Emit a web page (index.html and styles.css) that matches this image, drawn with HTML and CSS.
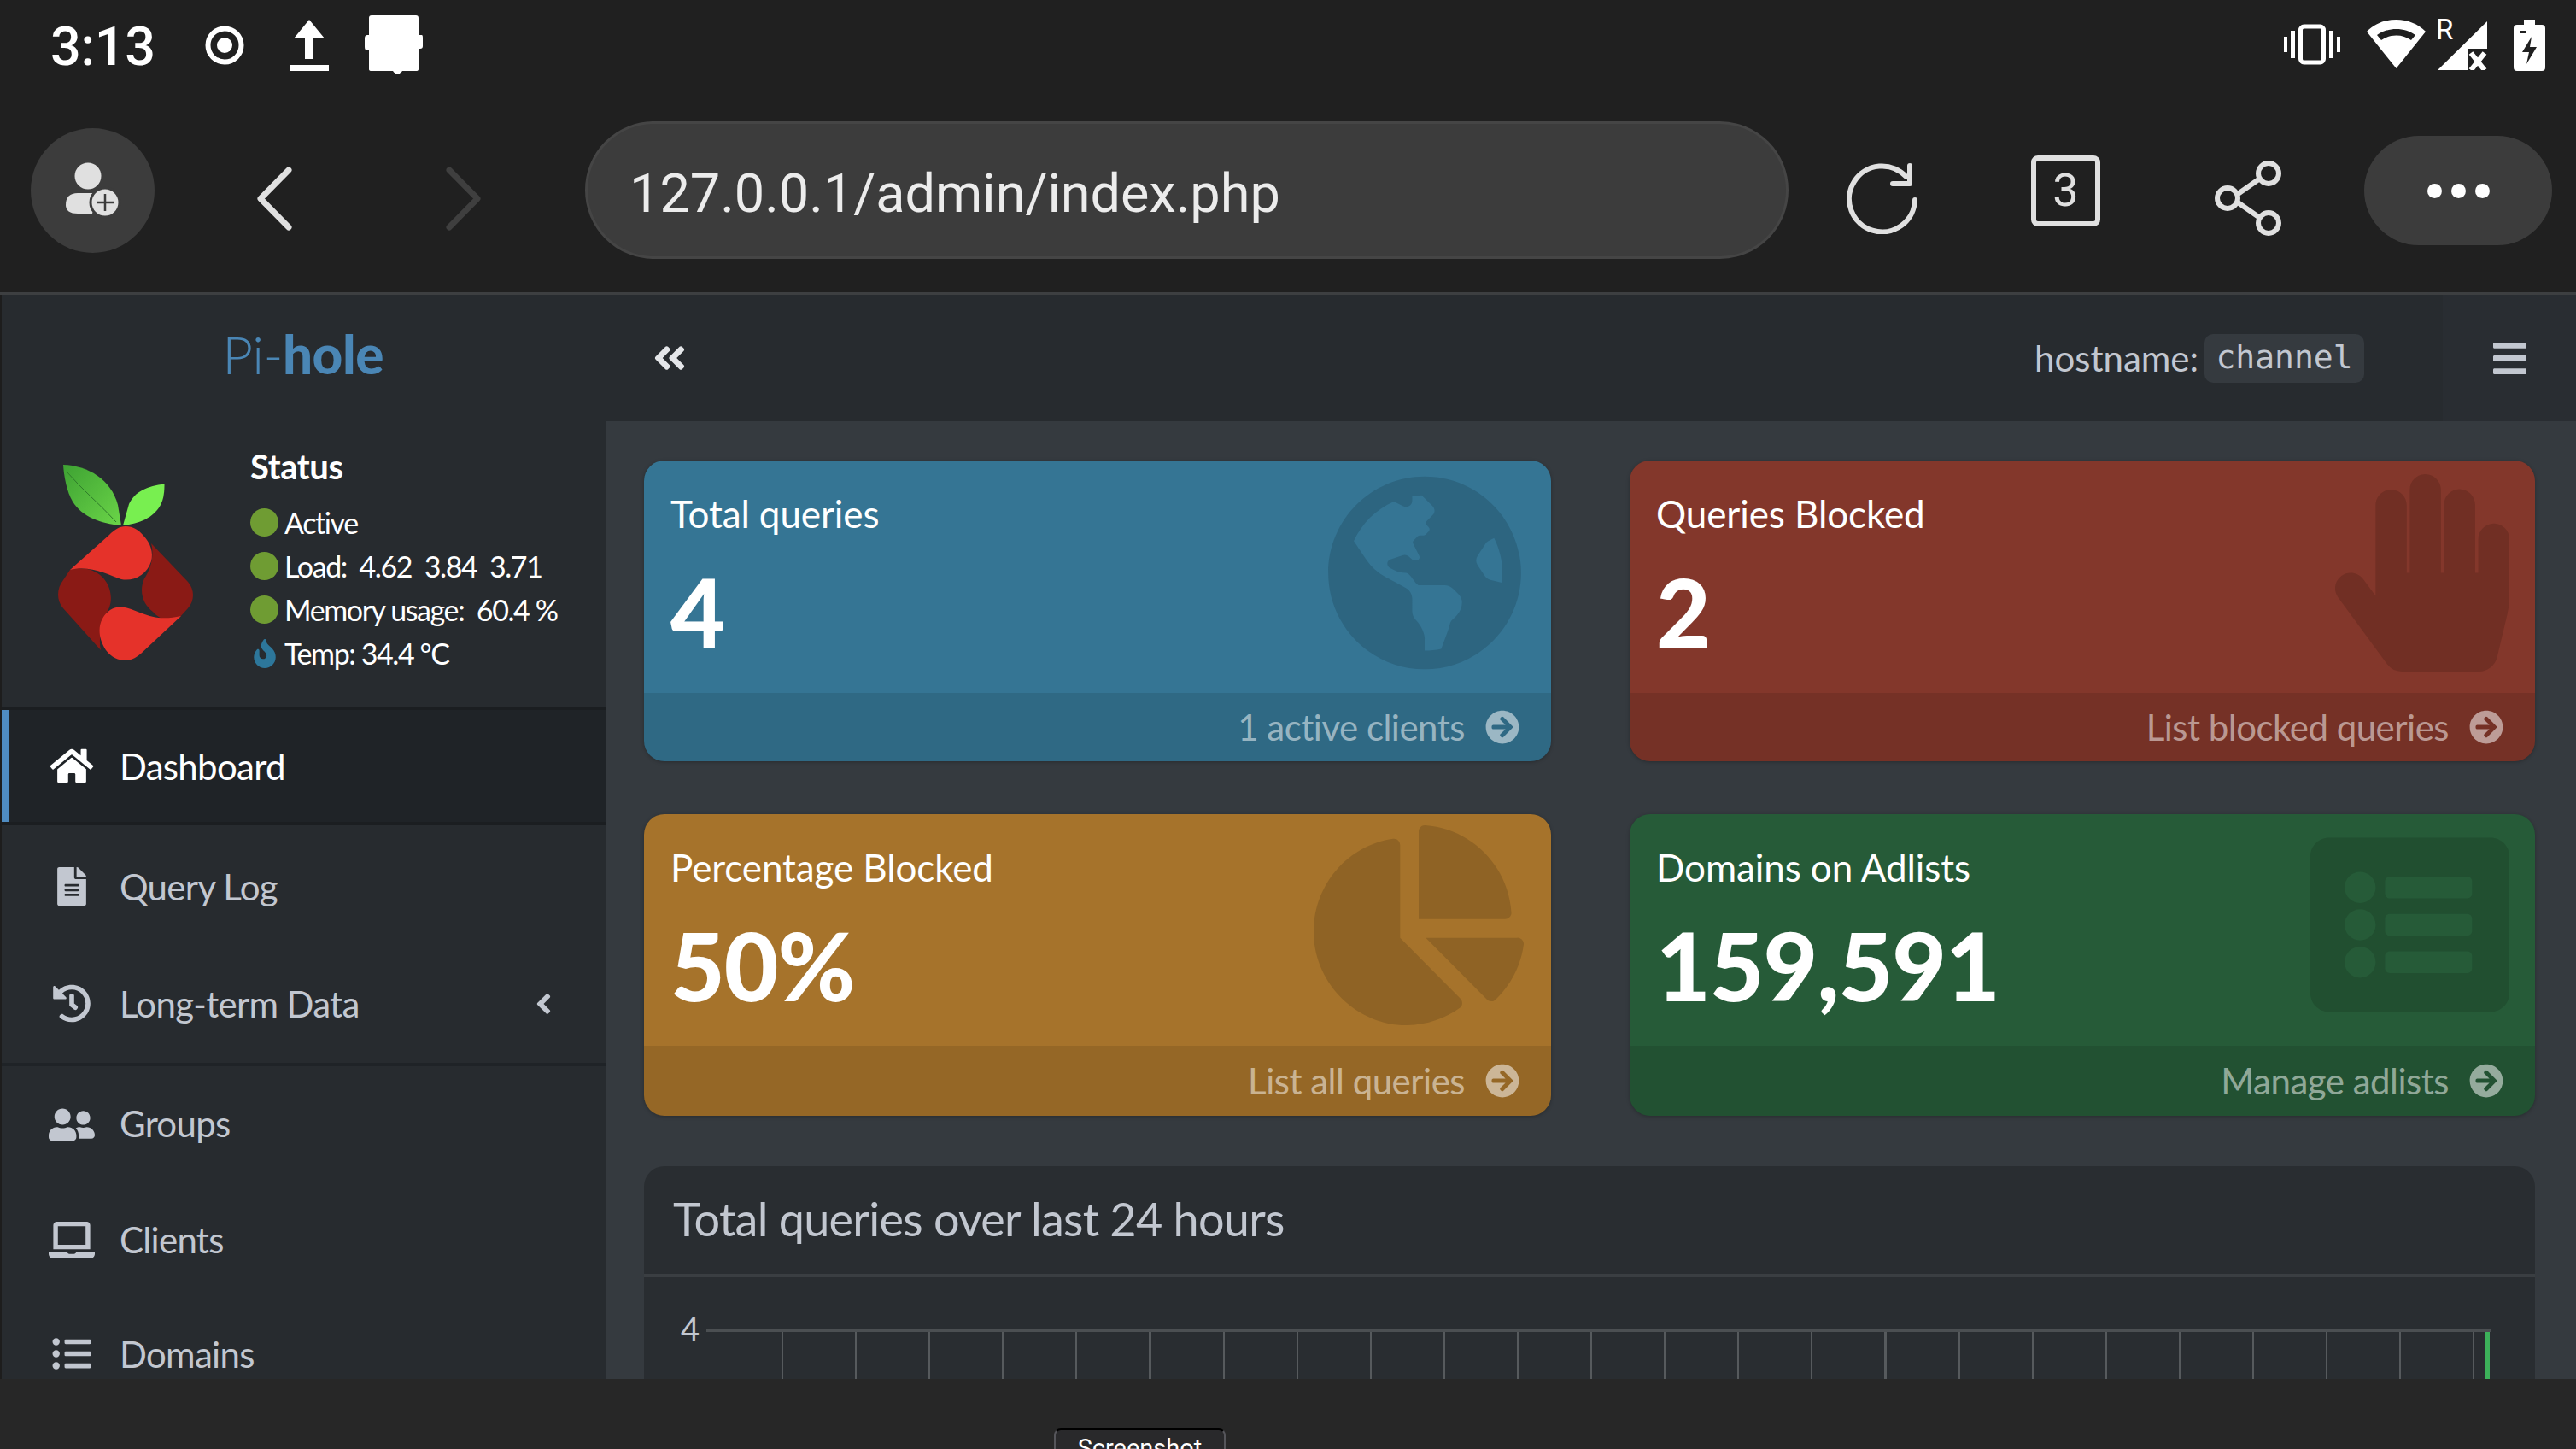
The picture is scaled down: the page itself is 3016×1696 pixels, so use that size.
FILE: index.html
```html
<!DOCTYPE html>
<html lang="en">
<head>
<meta charset="utf-8">
<title>Pi-hole</title>
<link rel="stylesheet" href="styles.css">
</head>
<body>
<div class="screen">
  <div class="chrome">
    <div class="statusbar">
      <span class="clock">3:13</span>
      <svg class="st st-rec" viewBox="0 0 46 46"><circle cx="23" cy="23" r="19.5" fill="none" stroke="#fff" stroke-width="6"/><circle cx="23" cy="23" r="9" fill="#fff"/></svg>
      <svg class="st st-up" viewBox="0 0 46 60"><path d="M23 0 L41 22 H28 V46 H18 V22 H5 Z M0 53 H46 V60 H0 Z" fill="#fff"/></svg>
      <svg class="st st-blob" viewBox="0 0 68 70"><path d="M5 4 Q5 1 8 1 H60 Q63 1 63 4 V24 H67 Q68 24 68 27 V37 Q68 40 65 40 H63 V64 Q63 66 60 66 H44 L41 70 H36 L33 66 H8 Q5 66 5 64 V42 H3 Q0 42 0 38 V28 Q0 24 3 24 H5 Z" fill="#fff"/></svg>
      <span class="st-spacer"></span>
      <svg class="st st-vib" viewBox="0 0 66 48"><path d="M0 15 H4 V33 H0 Z M8 8 H13 V40 H8 Z M53 8 H58 V40 H53 Z M62 15 H66 V33 H62 Z" fill="#fff"/><rect x="19.5" y="3" width="27" height="42" rx="4" fill="none" stroke="#fff" stroke-width="5"/></svg>
      <svg class="st st-wifi" viewBox="0 0 69 57"><path d="M34.5 0 C21 0 9 5 0 14 L34.5 57 L69 14 C60 5 48 0 34.5 0 Z M34.5 11 C43 11 50.500 13.500 57 18 L52 24 C47 20.500 41 18.500 34.500 18.500 C28 18.500 22 20.500 17 24 L12 18 C18.500 13.500 26 11 34.500 11 Z" fill="#fff" fill-rule="evenodd"/></svg>
      <span class="st-r">R</span>
      <svg class="st st-sig" viewBox="0 0 58 57"><path d="M58 0 V32 H36 V57 H0 Z" fill="#fff"/><path d="M39 37 L55 57 M55 37 L39 57" stroke="#fff" stroke-width="6"/></svg>
      <svg class="st st-bat" viewBox="0 0 37 60"><path d="M12 0 H25 V6 H33 Q37 6 37 10 V56 Q37 60 33 60 H4 Q0 60 0 56 V10 Q0 6 4 6 H12 Z" fill="#fff"/><path d="M21 20 L10 38 H18 L15 52 L27 32 H19 Z" fill="#202020"/><path d="M7 13 H14 V16 H7 Z" fill="#202020"/></svg>
    </div>
    <div class="toolbar">
      <div class="round-btn">
        <svg class="tool-user" viewBox="0 0 66 66"><circle cx="26" cy="16" r="15.500" fill="#e0e0e0"/><path d="M0 50 Q0 36 14 36 H38 L31 60 H14 Q0 60 0 50 Z" fill="#e0e0e0"/><circle cx="46" cy="47" r="17" fill="#e0e0e0" stroke="#3c3c3c" stroke-width="3"/><path d="M36 47 H56 M46 37 V57" stroke="#3c3c3c" stroke-width="2.500"/></svg>
      </div>
      <svg class="tool-back" viewBox="0 0 42 75"><path d="M38 4 L5 37.500 L38 71" fill="none" stroke="#e0e0e0" stroke-width="7" stroke-linecap="round" stroke-linejoin="round"/></svg>
      <svg class="tool-fwd" viewBox="0 0 42 75"><path d="M4 4 L37 37.500 L4 71" fill="none" stroke="#3f3f3f" stroke-width="7" stroke-linecap="round" stroke-linejoin="round"/></svg>
      <div class="urlbar">127.0.0.1/admin/index.php</div>
      <svg class="tool-reload" viewBox="0 0 84 84"><path d="M70 17 A38.500 38.500 0 1 0 80 44" fill="none" stroke="#e0e0e0" stroke-width="6" stroke-linecap="round"/><path d="M54 25 H74 V4" fill="none" stroke="#e0e0e0" stroke-width="6" stroke-linecap="round" stroke-linejoin="round"/></svg>
      <div class="tabs-count">3</div>
      <svg class="tool-share" viewBox="0 0 80 88"><path d="M20 44 L60 16 M20 44 L60 72" stroke="#e0e0e0" stroke-width="6"/><circle cx="15" cy="44" r="12" fill="#202020" stroke="#e0e0e0" stroke-width="6"/><circle cx="63" cy="15" r="12" fill="#202020" stroke="#e0e0e0" stroke-width="6"/><circle cx="63" cy="73" r="12" fill="#202020" stroke="#e0e0e0" stroke-width="6"/></svg>
      <div class="more-btn"><i></i><i></i><i></i></div>
    </div>
  </div>

  <div class="app">
    <div class="brand"><span class="brand-light">Pi-</span><span class="brand-bold">hole</span></div>
    <header class="topbar">
      <svg class="collapse" viewBox="0 0 448 512"><path d="M223.700 239l136-136c9.400-9.400 24.600-9.400 33.900 0l22.600 22.600c9.400 9.400 9.400 24.600 0 33.900L319.900 256l96.400 96.400c9.400 9.400 9.400 24.600 0 33.900L393.700 409c-9.400 9.400-24.600 9.400-33.900 0l-136-136c-9.500-9.400-9.500-24.600-.1-34zm-192 34l136 136c9.400 9.400 24.600 9.400 33.900 0l22.600-22.600c9.400-9.400 9.400-24.600 0-33.900L127.900 256l96.400-96.400c9.400-9.400 9.400-24.600 0-33.900L201.700 103c-9.400-9.400-24.600-9.400-33.900 0l-136 136c-9.500 9.400-9.500 24.600-.1 34z"/></svg>
      <span class="host-label">hostname:</span>
      <code class="host-code">channel</code>
      <div class="menu-toggle">
        <svg class="bars" viewBox="0 0 448 392" preserveAspectRatio="none"><path d="M16 72h416c8.837 0 16-7.163 16-16V16c0-8.837-7.163-16-16-16H16C7.163 0 0 7.163 0 16v40c0 8.837 7.163 16 16 16zm0 160h416c8.837 0 16-7.163 16-16v-40c0-8.837-7.163-16-16-16H16c-8.837 0-16 7.163-16 16v40c0 8.837 7.163 16 16 16zm0 160h416c8.837 0 16-7.163 16-16v-40c0-8.837-7.163-16-16-16H16c-8.837 0-16 7.163-16 16v40c0 8.837 7.163 16 16 16z"/></svg>
      </div>
    </header>

    <aside class="sidebar">
      <div class="user-panel">
        <svg class="logo" viewBox="0 0 158 230">
          <defs><linearGradient id="leaf" x1="0" y1="0" x2="1" y2="1"><stop offset="0" stop-color="#3ea233"/><stop offset="1" stop-color="#6bd548"/></linearGradient></defs>
          <path d="M6 1 C35 2 62 18 70 48 L74 72 C50 70 28 62 17 44 C10 32 7 15 6 1 Z" fill="url(#leaf)"/>
          <path d="M10 9 C28 30 50 48 68 68" fill="none" stroke="#2f7d2a" stroke-width="1"/>
          <path d="M124.500 23.600 C105 26 90 32 83 47 L76 72 C95 70 112 63 120 48 C124 40 124.500 32 124.500 23.600 Z" fill="#78ef50"/>
          <path d="M109 93 L152 138 C160 147 160 160 152 169 L142 180 C132 186 118 182 111 173 C100 165 94 150 101 134 C108 124 113 108 109 93 Z" fill="#8a1a15"/>
          <path d="M14 124 L6 136 C-2 146 -2 160 6 169 L50 218 C46 200 54 180 60 168 C66 152 58 128 34 123 C26 122 20 122 14 124 Z" fill="#8a1a15"/>
          <path d="M79 73 C88 73 94 77 100 84 C108 92 112 104 109 114 C104 130 88 138 74 135 C58 130 38 118 14 124 L60 83 C66 77 72 73 79 73 Z" fill="#e5322a"/>
          <path d="M144 178 L97 222 C90 228 84 230 79 230 C70 230 62 226 56 218 C48 206 46 192 52 181 C58 170 68 166 78 168 C95 171 110 186 144 178 Z" fill="#e5322a"/>
        </svg>
        <div class="status-info">
          <div class="status-title">Status</div>
          <div class="status-line"><i class="dot"></i>Active</div>
          <div class="status-line"><i class="dot"></i>Load:&nbsp; 4.62&nbsp; 3.84&nbsp; 3.71</div>
          <div class="status-line"><i class="dot"></i>Memory usage:&nbsp; 60.4 %</div>
          <div class="status-line"><svg class="fire" viewBox="0 0 384 512"><path d="M216 23.860c0-23.800-30.650-32.770-44.150-13.040C48 191.850 224 200 224 288c0 35.630-29.110 64.460-64.850 63.990-35.170-.45-63.150-29.770-63.150-64.940v-85.510c0-21.700-26.470-32.230-41.430-16.500C27.800 213.160 0 261.330 0 320c0 105.870 86.130 192 192 192s192-86.130 192-192c0-170.290-168-193-168-296.140z"/></svg>Temp: 34.4 °C</div>
        </div>
      </div>
      <nav class="nav">
        <a class="nav-item active">
          <svg class="nav-icon" viewBox="0 0 576 512"><path d="M280.370 148.260L96 300.110V464a16 16 0 0 0 16 16l112.060-.29a16 16 0 0 0 15.920-16V368a16 16 0 0 1 16-16h64a16 16 0 0 1 16 16v95.640a16 16 0 0 0 16 16.050L464 480a16 16 0 0 0 16-16V300L295.670 148.260a12.190 12.190 0 0 0-15.300 0zM571.600 251.470L488 182.560V44.050a12 12 0 0 0-12-12h-56a12 12 0 0 0-12 12v72.610L318.470 43a48 48 0 0 0-61 0L4.340 251.470a12 12 0 0 0-1.600 16.900l25.500 31A12 12 0 0 0 45.150 301l235.220-193.740a12.190 12.190 0 0 1 15.300 0L530.900 301a12 12 0 0 0 16.900-1.600l25.500-31a12 12 0 0 0-1.700-16.930z"/></svg>
          Dashboard
        </a>
        <a class="nav-item item-log">
          <svg class="nav-icon" viewBox="0 0 384 512"><path d="M224 136V0H24C10.700 0 0 10.700 0 24v464c0 13.300 10.700 24 24 24h336c13.300 0 24-10.700 24-24V160H248c-13.200 0-24-10.800-24-24zm64 236c0 6.600-5.400 12-12 12H108c-6.600 0-12-5.400-12-12v-8c0-6.600 5.400-12 12-12h168c6.600 0 12 5.400 12 12v8zm0-64c0 6.600-5.400 12-12 12H108c-6.600 0-12-5.400-12-12v-8c0-6.600 5.400-12 12-12h168c6.600 0 12 5.400 12 12v8zm0-72v8c0 6.600-5.400 12-12 12H108c-6.600 0-12-5.400-12-12v-8c0-6.600 5.400-12 12-12h168c6.600 0 12 5.400 12 12zm96-114.100v6.100H256V0h6.100c6.400 0 12.500 2.500 17 7l97.900 98c4.500 4.500 7 10.600 7 16.900z"/></svg>
          Query Log
        </a>
        <a class="nav-item item-long">
          <svg class="nav-icon" viewBox="0 0 512 512"><path d="M504 255.531c.253 136.640-111.180 248.372-247.820 248.468-59.015.042-113.223-20.530-155.822-54.911-11.077-8.940-11.905-25.541-1.839-35.607l11.267-11.267c8.609-8.609 22.353-9.551 31.891-1.984C173.062 425.135 212.781 440 256 440c101.705 0 184-82.311 184-184 0-101.705-82.311-184-184-184-48.814 0-93.149 18.969-126.068 49.932l50.754 50.754c10.080 10.080 2.941 27.314-11.313 27.314H24c-8.837 0-16-7.163-16-16V38.627c0-14.254 17.234-21.393 27.314-11.314l49.372 49.372C129.209 34.136 189.552 8 256 8c136.810 0 247.747 110.780 248 247.531zm-180.912 78.784l9.823-12.630c8.138-10.463 6.253-25.542-4.210-33.679L288 256.349V152c0-13.255-10.745-24-24-24h-16c-13.255 0-24 10.745-24 24v135.651l65.409 50.874c10.463 8.137 25.541 6.253 33.679-4.210z"/></svg>
          Long-term Data
          <svg class="nav-caret" viewBox="0 0 256 512"><path d="M31.700 239l136-136c9.400-9.400 24.600-9.400 33.900 0l22.600 22.600c9.400 9.400 9.400 24.600 0 33.900L127.900 256l96.400 96.400c9.400 9.400 9.400 24.600 0 33.900L201.700 409c-9.400 9.400-24.600 9.400-33.900 0l-136-136c-9.500-9.400-9.500-24.600-.1-34z"/></svg>
        </a>
        <a class="nav-item item-groups">
          <svg class="nav-icon" viewBox="0 0 640 512"><path d="M192 256c61.900 0 112-50.100 112-112S253.900 32 192 32 80 82.100 80 144s50.100 112 112 112zm76.800 32h-8.300c-20.800 10-43.900 16-68.500 16s-47.600-6-68.500-16h-8.300C51.600 288 0 339.600 0 403.200V432c0 26.500 21.500 48 48 48h288c26.500 0 48-21.500 48-48v-28.800c0-63.600-51.600-115.200-115.200-115.200zM480 256c53 0 96-43 96-96s-43-96-96-96-96 43-96 96 43 96 96 96zm48 32h-3.800c-13.900 4.800-28.600 8-44.200 8s-30.300-3.200-44.200-8H432c-20.400 0-39.200 5.900-55.700 15.400 24.400 26.300 39.700 61.200 39.700 99.800v38.400c0 2.200-.5 4.300-.6 6.400H592c26.500 0 48-21.500 48-48 0-61.900-50.100-112-112-112z"/></svg>
          Groups
        </a>
        <a class="nav-item item-clients">
          <svg class="nav-icon" viewBox="0 0 640 512"><path d="M624 416H381.540c-.74 19.810-14.710 32-32.740 32H288c-18.690 0-33.020-17.470-32.770-32H16c-8.800 0-16 7.200-16 16v16c0 35.200 28.800 64 64 64h512c35.200 0 64-28.800 64-64v-16c0-8.800-7.200-16-16-16zM576 48c0-26.400-21.600-48-48-48H112C85.600 0 64 21.600 64 48v336h512V48zm-64 272H128V64h384v256z"/></svg>
          Clients
        </a>
        <a class="nav-item item-domains">
          <svg class="nav-icon" viewBox="0 0 512 512"><path d="M48 48a48 48 0 1 0 48 48 48 48 0 0 0-48-48zm0 160a48 48 0 1 0 48 48 48 48 0 0 0-48-48zm0 160a48 48 0 1 0 48 48 48 48 0 0 0-48-48zm448 16H176a16 16 0 0 0-16 16v32a16 16 0 0 0 16 16h320a16 16 0 0 0 16-16v-32a16 16 0 0 0-16-16zm0-320H176a16 16 0 0 0-16 16v32a16 16 0 0 0 16 16h320a16 16 0 0 0 16-16V80a16 16 0 0 0-16-16zm0 160H176a16 16 0 0 0-16 16v32a16 16 0 0 0 16 16h320a16 16 0 0 0 16-16v-32a16 16 0 0 0-16-16z"/></svg>
          Domains
        </a>
      </nav>
    </aside>

    <main class="content">
      <div class="cards">
        <section class="card card-blue">
          <svg class="card-icon icon-globe" viewBox="0 0 496 512"><path d="M248 8C111.030 8 0 119.030 0 256s111.030 248 248 248 248-111.030 248-248S384.970 8 248 8zm82.290 357.600c-3.900 3.880-7.990 7.950-11.310 11.280-2.990 3-5.100 6.700-6.170 10.710-1.510 5.660-2.730 11.380-4.770 16.870l-17.390 46.850c-13.760 3-28 4.690-42.650 4.690v-27.380c1.690-12.620-7.640-36.260-22.630-51.250-6-6-9.370-14.140-9.370-22.630v-32.010c0-11.640-6.270-22.340-16.460-27.970-14.370-7.950-34.810-19.060-48.810-26.110-11.480-5.780-22.100-13.140-31.650-21.750l-.8-.72a114.792 114.792 0 0 1-18.060-20.740c-9.380-13.770-24.660-36.420-34.590-51.140 20.470-45.500 57.360-82.040 103.200-101.890l24.010 12.010C203.480 89.740 216 82.010 216 70.110v-11.300c7.990-1.290 16.120-2.110 24.390-2.420l28.300 28.300c6.250 6.250 6.250 16.380 0 22.630L264 112l-10.340 10.340c-3.120 3.120-3.120 8.190 0 11.310l4.690 4.690c3.120 3.120 3.120 8.190 0 11.310l-8 8a8.008 8.008 0 0 1-5.660 2.340h-8.990c-2.080 0-4.080.81-5.580 2.270l-9.920 9.650a8.008 8.008 0 0 0-1.580 9.310l15.590 31.190c2.660 5.320-1.210 11.580-7.150 11.580h-5.640c-1.930 0-3.790-.7-5.240-1.960l-9.280-8.060a16.017 16.017 0 0 0-15.550-3.100l-31.170 10.390a11.950 11.950 0 0 0-8.170 11.340c0 4.530 2.560 8.660 6.610 10.690l11.080 5.540c9.410 4.710 19.790 7.160 30.310 7.160s22.590 27.290 32 32h66.750c8.490 0 16.620 3.370 22.630 9.370l13.690 13.690a30.503 30.503 0 0 1 8.930 21.570 46.536 46.536 0 0 1-13.720 32.980zM417 274.250c-5.790-1.450-10.840-5-14.150-9.970l-17.980-26.970a23.970 23.970 0 0 1 0-26.620l19.590-29.380c2.320-3.470 5.500-6.290 9.240-8.150l12.980-6.490C440.200 193.590 448 223.870 448 256c0 8.670-.74 17.160-1.820 25.540L417 274.250z"/></svg>
          <div class="card-body">
            <div class="card-title">Total queries</div>
            <div class="card-value">4</div>
          </div>
          <a class="card-foot">1 active clients <svg class="foot-arrow" viewBox="0 0 512 512"><path d="M256 8c137 0 248 111 248 248S393 504 256 504 8 393 8 256 119 8 256 8zm-28.900 143.600l75.500 72.400H120c-13.300 0-24 10.700-24 24v16c0 13.300 10.700 24 24 24h182.600l-75.500 72.400c-9.700 9.300-9.900 24.800-.4 34.300l11 10.900c9.400 9.400 24.600 9.400 33.900 0L404.300 273c9.400-9.400 9.400-24.600 0-33.900L271.600 106.300c-9.400-9.400-24.600-9.400-33.900 0l-11 10.900c-9.500 9.600-9.300 25.100.4 34.400z"/></svg></a>
        </section>
        <section class="card card-red">
          <svg class="card-icon icon-hand" viewBox="0 0 448 512" preserveAspectRatio="none"><path d="M408.781 128.007C386.356 127.578 368 146.360 368 168.790V256h-8V79.790c0-22.430-18.356-41.212-40.781-40.783C297.488 39.423 280 57.169 280 79v177h-8V40.790C272 18.360 253.644-.422 231.219.007 209.488.423 192 18.169 192 40v216h-8V80.790c0-22.430-18.356-41.212-40.781-40.783C121.488 40.423 104 58.169 104 80v235.992l-31.648-43.519c-12.993-17.866-38.009-21.817-55.877-8.823-17.865 12.994-21.815 38.010-8.822 55.877l125.601 172.705A48 48 0 0 0 172.073 512h197.590c22.274 0 41.622-15.324 46.724-37.006l26.508-112.660a192.011 192.011 0 0 0 5.104-43.975V168c.001-21.831-17.487-39.577-39.218-39.993z"/></svg>
          <div class="card-body">
            <div class="card-title">Queries Blocked</div>
            <div class="card-value">2</div>
          </div>
          <a class="card-foot">List blocked queries <svg class="foot-arrow" viewBox="0 0 512 512"><path d="M256 8c137 0 248 111 248 248S393 504 256 504 8 393 8 256 119 8 256 8zm-28.900 143.600l75.500 72.400H120c-13.300 0-24 10.700-24 24v16c0 13.300 10.700 24 24 24h182.600l-75.500 72.400c-9.700 9.300-9.900 24.800-.4 34.300l11 10.900c9.400 9.400 24.600 9.400 33.900 0L404.300 273c9.400-9.400 9.400-24.600 0-33.900L271.600 106.300c-9.400-9.400-24.600-9.400-33.900 0l-11 10.900c-9.500 9.600-9.300 25.100.4 34.400z"/></svg></a>
        </section>
        <section class="card card-orange">
          <svg class="card-icon icon-pie" viewBox="0 0 544 512" preserveAspectRatio="none"><path d="M527.790 288H290.500l158.030 158.030c6.040 6.040 15.980 6.530 22.190.68 38.700-36.460 65.320-85.610 73.130-140.860 1.340-9.460-6.510-17.850-16.060-17.850zm-15.830-64.800C503.720 103.740 408.260 8.280 288.800.04 279.680-.59 272 7.100 272 16.240V240h223.770c9.140 0 16.820-7.680 16.190-16.800zM224 288V50.710c0-9.550-8.390-17.400-17.840-16.060C86.990 51.490-4.100 155.600.14 280.370 4.500 408.510 114.830 513.590 243.030 511.980c50.400-.63 96.970-16.870 135.260-44.030 7.900-5.600 8.420-17.230 1.570-24.080L224 288z"/></svg>
          <div class="card-body">
            <div class="card-title">Percentage Blocked</div>
            <div class="card-value">50%</div>
          </div>
          <a class="card-foot">List all queries <svg class="foot-arrow" viewBox="0 0 512 512"><path d="M256 8c137 0 248 111 248 248S393 504 256 504 8 393 8 256 119 8 256 8zm-28.900 143.600l75.500 72.400H120c-13.300 0-24 10.700-24 24v16c0 13.300 10.700 24 24 24h182.600l-75.500 72.400c-9.700 9.300-9.900 24.800-.4 34.300l11 10.900c9.400 9.400 24.600 9.400 33.900 0L404.300 273c9.400-9.400 9.400-24.600 0-33.900L271.600 106.300c-9.400-9.400-24.600-9.400-33.900 0l-11 10.900c-9.500 9.600-9.300 25.100.4 34.400z"/></svg></a>
        </section>
        <section class="card card-green">
          <svg class="card-icon icon-list" viewBox="0 0 512 512"><path fill-rule="evenodd" d="M464 32H48C21.490 32 0 53.490 0 80v352c0 26.510 21.490 48 48 48h416c26.510 0 48-21.490 48-48V80c0-26.510-21.490-48-48-48zM128 120c22.091 0 40 17.909 40 40s-17.909 40-40 40-40-17.909-40-40 17.909-40 40-40zm0 96c22.091 0 40 17.909 40 40s-17.909 40-40 40-40-17.909-40-40 17.909-40 40-40zm0 96c22.091 0 40 17.909 40 40s-17.909 40-40 40-40-17.909-40-40 17.909-40 40-40zm288-136v-32c0-6.627-5.373-12-12-12H204c-6.627 0-12 5.373-12 12v32c0 6.627 5.373 12 12 12h200c6.627 0 12-5.373 12-12zm0 96v-32c0-6.627-5.373-12-12-12H204c-6.627 0-12 5.373-12 12v32c0 6.627 5.373 12 12 12h200c6.627 0 12-5.373 12-12zm0 96v-32c0-6.627-5.373-12-12-12H204c-6.627 0-12 5.373-12 12v32c0 6.627 5.373 12 12 12h200c6.627 0 12-5.373 12-12z"/></svg>
          <div class="card-body">
            <div class="card-title">Domains on Adlists</div>
            <div class="card-value">159,591</div>
          </div>
          <a class="card-foot">Manage adlists <svg class="foot-arrow" viewBox="0 0 512 512"><path d="M256 8c137 0 248 111 248 248S393 504 256 504 8 393 8 256 119 8 256 8zm-28.900 143.600l75.500 72.400H120c-13.300 0-24 10.700-24 24v16c0 13.300 10.700 24 24 24h182.600l-75.500 72.400c-9.700 9.300-9.900 24.800-.4 34.300l11 10.900c9.400 9.400 24.600 9.400 33.900 0L404.300 273c9.400-9.400 9.400-24.600 0-33.900L271.600 106.300c-9.400-9.400-24.600-9.400-33.900 0l-11 10.900c-9.500 9.600-9.300 25.100.4 34.400z"/></svg></a>
        </section>
      </div>
      <section class="panel">
        <h3 class="panel-title">Total queries over last 24 hours</h3>
        <div class="chart">
          <span class="axis-label">4</span>
          <div class="plot"><div class="plot-lines"></div><div class="plot-bar"></div></div>
        </div>
      </section>
    </main>
  </div>

  <div class="bottombar"><div class="tooltip">Screenshot</div></div>
</div>
</body>
</html>
```
FILE: styles.css
```css
* { box-sizing: border-box; }
html, body { margin: 0; padding: 0; background: #202020; }
.screen { width: 3016px; height: 1696px; overflow: hidden; display: flex; flex-direction: column; position: relative; font-family: "Lato", "Noto Sans", sans-serif; }

/* Browser chrome */
.chrome { height: 345px; flex: none; background: #202020; border-bottom: 3px solid #3d3f41; display: flex; flex-direction: column; }
.statusbar { height: 142px; display: flex; align-items: flex-start; color: #fff; position: relative; }
.clock { font-family: "Roboto", sans-serif; font-weight: 500; font-size: 63px; line-height: 64px; margin: 23px 0 0 59px; width: 121px; letter-spacing: -.3px; }
.st { display: block; flex: none; }
.st-rec { width: 46px; height: 46px; margin: 30px 0 0 60px; }
.st-up { width: 46px; height: 60px; margin: 23px 0 0 53px; }
.st-blob { width: 68px; height: 70px; margin: 17px 0 0 42px; }
.st-spacer { flex: 1; }
.st-vib { width: 66px; height: 48px; margin: 28px 0 0 0; }
.st-wifi { width: 69px; height: 57px; margin: 23px 0 0 31px; }
.st-r { font-family: "Roboto", sans-serif; font-size: 33px; line-height: 30px; margin: 20px -16px 0 12px; width: 18px; }
.st-sig { width: 58px; height: 57px; margin: 25px 0 0 0; }
.st-bat { width: 37px; height: 60px; margin: 23px 36px 0 31px; }

.toolbar { height: 200px; display: flex; align-items: flex-start; }
.round-btn { width: 145px; height: 146px; border-radius: 50%; background: #3c3c3c; margin: 8px 0 0 36px; display: flex; align-items: center; justify-content: center; flex: none; }
.tool-user { width: 66px; height: 66px; display: block; margin: 0 0 0 2px; }
.tool-back { width: 42px; height: 75px; margin: 53px 0 0 119px; flex: none; }
.tool-fwd { width: 42px; height: 75px; margin: 53px 0 0 180px; flex: none; }
.urlbar { width: 1409px; height: 161px; margin: 0 0 0 121px; flex: none; border-radius: 81px; background: #3c3c3c; border: 3px solid #454545; color: #ececec; font-family: "Roboto", sans-serif; font-size: 63px; line-height: 164px; padding-left: 49px; }
.tool-reload { width: 84px; height: 84px; margin: 48px 0 0 68px; flex: none; }
.tabs-count { width: 81px; height: 83px; margin: 40px 0 0 132px; flex: none; border: 6px solid #e0e0e0; border-radius: 8px; color: #e0e0e0; font-family: "Roboto", sans-serif; font-size: 54px; line-height: 70px; text-align: center; }
.tool-share { width: 80px; height: 88px; margin: 46px 0 0 134px; flex: none; }
.more-btn { width: 220px; height: 128px; margin: 17px 0 0 95px; flex: none; border-radius: 64px; background: #3c3c3c; display: flex; align-items: center; justify-content: center; gap: 11px; }
.more-btn i { width: 17px; height: 17px; border-radius: 50%; background: #fff; display: block; }

/* App */
.app { height: 1269px; flex: none; display: grid; grid-template-columns: 708px 1fr; grid-template-rows: 148px 1fr; background: #353a3f; border-left: 2px solid #1d1d1d; overflow: hidden; }
.brand { background: #272b2f; display: flex; align-items: center; justify-content: center; font-size: 62px; line-height: 62px; color: #4a86b5; padding: 0 3px 10px 0; letter-spacing: -.5px; }
.brand-light { font-weight: 300; }
.brand-bold { font-weight: 900; }
.topbar { background: #272b2f; display: flex; align-items: center; color: #c2c7d0; }
.collapse { width: 44px; height: 44px; fill: #e4e6e9; margin-left: 52px; flex: none; }
.host-label { margin-left: auto; font-size: 42px; line-height: 50px; }
.host-code { margin-left: 7px; width: 187px; height: 57px; background: #353a3f; border-radius: 10px; font-family: "DejaVu Sans Mono", monospace; font-size: 38px; line-height: 55px; text-align: center; }
.menu-toggle { width: 156px; margin-left: 92px; align-self: stretch; background: #292d32; display: flex; align-items: center; padding-left: 59px; }
.bars { width: 39px; height: 37px; fill: #c2c7d0; display: block; }

/* Sidebar */
.sidebar { background: #272b2f; overflow: hidden; color: #c2c7d0; }
.user-panel { height: 334px; display: flex; padding: 50px 0 0 66px; }
.logo { width: 158px; height: 230px; flex: none; display: block; }
.status-info { margin: -21px 0 0 67px; color: #fff; font-size: 34px; letter-spacing: -1.4px; }
.status-title { font-weight: 700; font-size: 40px; line-height: 48px; margin-bottom: 16px; letter-spacing: -.4px; }
.status-line { display: flex; align-items: center; height: 51px; white-space: nowrap; }
.dot { width: 33px; height: 33px; border-radius: 50%; background: #6f9c33; margin-right: 7px; flex: none; }
.fire { width: 28px; height: 34px; fill: #2d779b; margin: 0 9px 0 3px; flex: none; }

.nav { display: flex; flex-direction: column; }
.nav-item { display: flex; align-items: center; font-size: 42px; letter-spacing: -.7px; height: 135px; padding-left: 138px; position: relative; flex: none; }
.nav-icon { width: 54px; height: 45px; fill: #c2c7d0; position: absolute; left: 55px; top: 50%; margin-top: -23px; }
.nav-item.active { height: 139px; color: #fff; background: #1f2327; border-top: 4px solid #1b1e21; border-bottom: 4px solid #1b1e21; box-shadow: inset 8px 0 0 #4f8cc2; }
.nav-item.active .nav-icon { fill: #fff; }
.item-log { height: 144px; }
.item-long { height: 134px; padding-bottom: 4px; }
.item-groups { height: 142px; border-top: 4px solid #1f2327; padding-bottom: 4px; }
.item-clients { height: 132px; padding-bottom: 2px; }
.item-domains { height: 134px; }
.item-long .nav-icon { margin-top: -25px; }
.nav-caret { position: absolute; right: 63px; top: 50%; width: 21px; height: 38px; margin-top: -21px; fill: #c2c7d0; }

/* Content */
.content { padding: 46px 48px 0 44px; overflow: hidden; }
.cards { display: grid; grid-template-columns: 1062px 1060px; column-gap: 92px; row-gap: 62px; }
.card { height: 352px; border-radius: 24px; position: relative; overflow: hidden; display: flex; flex-direction: column; box-shadow: 0 1px 4px rgba(0,0,0,.25); color: #fff; }
.card-blue { background: #357594; }
.card-red { background: #83372b; }
.card-orange { background: #a6732b; height: 353px; }
.card-green { background: #265b38; height: 353px; }
.card-orange .card-foot, .card-green .card-foot { height: 82px; }
.card-icon { position: absolute; }
.icon-globe { width: 226px; height: 233px; right: 35px; top: 15px; fill: #2d6580; }
.icon-hand { width: 204px; height: 231px; right: 30px; top: 16px; fill: #712f24; }
.icon-pie { width: 246px; height: 234px; right: 32px; top: 13px; fill: #8f6325; }
.icon-list { width: 233px; height: 233px; right: 30px; top: 13px; fill: #214f30; }
.card-body { flex: 1; padding: 35px 0 0 31px; position: relative; }
.card-title { font-size: 44px; line-height: 54px; letter-spacing: -.1px; }
.card-value { font-size: 110px; font-weight: 900; line-height: 120px; margin-top: 27px; letter-spacing: -1px; }
.card-foot { height: 80px; flex: none; background: rgba(0,0,0,.1); color: rgba(255,255,255,.52); font-size: 42px; letter-spacing: -.5px; display: flex; align-items: center; justify-content: flex-end; padding-right: 37px; gap: 24px; position: relative; }
.foot-arrow { width: 40px; height: 40px; fill: rgba(255,255,255,.52); flex: none; }

.panel { margin-top: 59px; height: 400px; background: #292d31; border-radius: 24px 24px 0 0; }
.panel-title { margin: 0; height: 130px; border-bottom: 4px solid #3a3e42; font-weight: 400; font-size: 54px; line-height: 124px; letter-spacing: -.75px; color: #c2c7d0; padding-left: 34px; }
.chart { display: flex; padding: 50px 0 0 43px; }
.axis-label { width: 30px; font-size: 38px; line-height: 44px; color: #c2c7d0; margin-top: -12px; letter-spacing: -1px; }
.plot { width: 2089px; height: 80px; border-top: 4px solid #4b4f52; margin-top: 10px; position: relative; display: flex; justify-content: flex-end; }
.plot-lines { position: absolute; left: 4px; top: 0; width: 2070px; height: 100%; background: repeating-linear-gradient(90deg, transparent 0, transparent 84px, #565a5d 84px, #565a5d 86.100px); }
.plot-bar { width: 5px; height: 100%; background: #3cb15a; margin-right: 1px; position: relative; }

/* Bottom */
.bottombar { flex: 1; background: #272727; position: relative; }
.tooltip { position: absolute; left: 1234px; top: 58px; width: 201px; height: 60px; background: #29292b; border: 2px solid #55555a; border-top-color: #000; border-radius: 8px 8px 0 0; color: #fff; font-family: "Roboto", sans-serif; font-size: 29px; line-height: 42px; padding-top: 0; text-align: center; }
```
